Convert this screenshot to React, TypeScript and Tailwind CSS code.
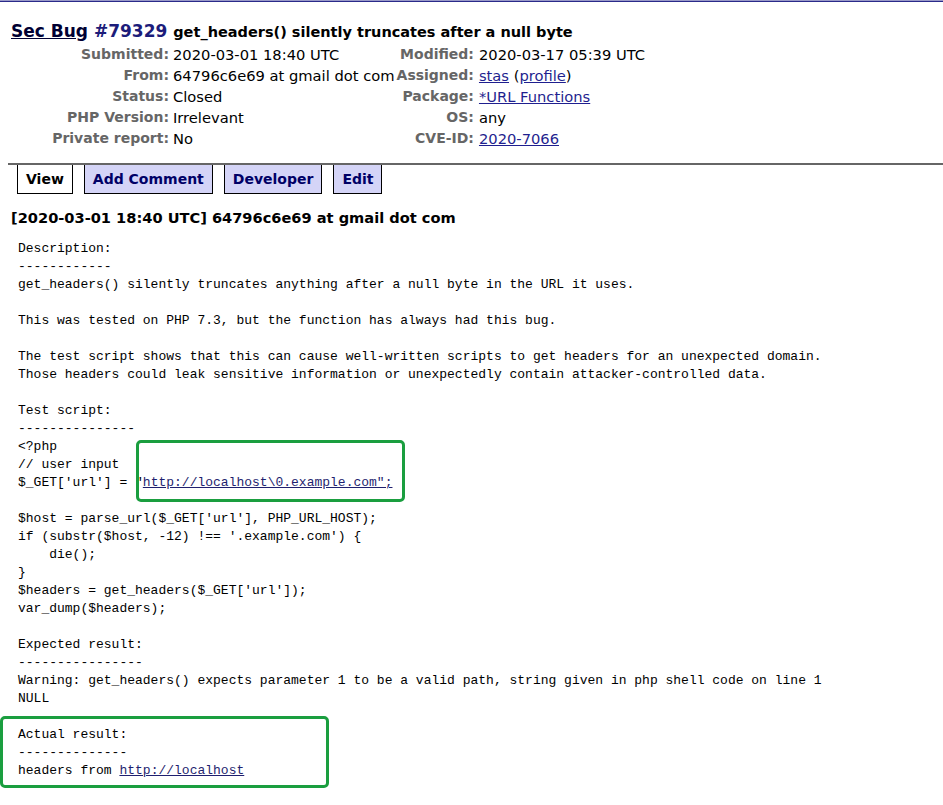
import React from "react";

const rows: [string, React.ReactNode, string, React.ReactNode][] = [
  ["Submitted:", "2020-03-01 18:40 UTC", "Modified:", "2020-03-17 05:39 UTC"],
  [
    "From:",
    "64796c6e69 at gmail dot com",
    "Assigned:",
    <>
      <a href="#" className="text-[#1f1f8f] underline">stas</a> (
      <a href="#" className="text-[#1f1f8f] underline">profile</a>)
    </>,
  ],
  ["Status:", "Closed", "Package:", <a href="#" className="text-[#1f1f8f] underline">*URL Functions</a>],
  ["PHP Version:", "Irrelevant", "OS:", "any"],
  ["Private report:", "No", "CVE-ID:", <a href="#" className="text-[#1f1f8f] underline">2020-7066</a>],
];

const tabs = ["View", "Add Comment", "Developer", "Edit"];

export default function App() {
  return (
    <div className="relative min-h-screen bg-white text-black font-['DejaVu_Sans',Verdana,sans-serif]">
      <div className="h-[1px] bg-[#9a9ac8]" />
      <div className="h-[1px] bg-[#2a2a8a]" />

      <div className="px-[11px] pt-[17px]">
        <h1 className="text-[17px] font-bold leading-[24px]">
          <a href="#" className="underline text-[#000033]">Sec Bug</a>{" "}
          <span className="text-[#1c1c7a]">#79329</span>{" "}
          <span className="text-[14.5px]">get_headers() silently truncates after a null byte</span>
        </h1>

        <table className="leading-[21px] border-separate border-spacing-0">
          <tbody>
            {rows.map(([l1, v1, l2, v2]) => (
              <tr key={l1}>
                <th className="text-[14px] text-right font-bold text-[#666] pl-[2px] pr-[4px] w-[162px] whitespace-nowrap">{l1}</th>
                <td className="text-[14.7px] pr-[2px] whitespace-nowrap">{v1}</td>
                <th className="text-[14px] text-right font-bold text-[#666] pr-[5px] whitespace-nowrap">{l2}</th>
                <td className="text-[14.7px] whitespace-nowrap">{v2}</td>
              </tr>
            ))}
          </tbody>
        </table>
      </div>

      {/* tabs */}
      <div className="mt-[14px] ml-[8px] border-t-2 border-[#666] flex gap-[11px] pl-[9px]">
        {tabs.map((t, i) => (
          <div
            key={t}
            className={
              "border border-t-0 border-black px-[8px] h-[29px] flex items-center text-[14px] font-bold " +
              (i === 0 ? "bg-white text-black" : "bg-[#d4d4f7] text-[#000066]")
            }
          >
            {t}
          </div>
        ))}
      </div>

      <div className="px-[11px] pt-[14px] text-[14.6px] font-bold leading-[20px]">
        [2020-03-01 18:40 UTC] 64796c6e69 at gmail dot com
      </div>

      <pre className="mt-[12px] pl-[18px] font-['Liberation_Mono','Courier_New',monospace] text-[13px] leading-[18px] text-black">
{`Description:
------------
get_headers() silently truncates anything after a null byte in the URL it uses.

This was tested on PHP 7.3, but the function has always had this bug.

The test script shows that this can cause well-written scripts to get headers for an unexpected domain.
Those headers could leak sensitive information or unexpectedly contain attacker-controlled data.

Test script:
---------------
<?php
// user input
$_GET['url'] = "`}<a href="#" className="underline text-[#1f1f6f]">{`http://localhost\\0.example.com";`}</a>{`

$host = parse_url($_GET['url'], PHP_URL_HOST);
if (substr($host, -12) !== '.example.com') {
    die();
}
$headers = get_headers($_GET['url']);
var_dump($headers);

Expected result:
----------------
Warning: get_headers() expects parameter 1 to be a valid path, string given in php shell code on line 1
NULL

Actual result:
--------------
headers from `}<a href="#" className="underline text-[#1f1f6f]">http://localhost</a>
      </pre>

      {/* annotation boxes */}
      <div className="absolute left-[136px] top-[440px] w-[269px] h-[62px] border-[3px] border-[#1a9e3f] rounded-[5px]" />
      <div className="absolute left-[0px] top-[716px] w-[329px] h-[72px] border-[3px] border-[#1a9e3f] rounded-[5px]" />
    </div>
  );
}
